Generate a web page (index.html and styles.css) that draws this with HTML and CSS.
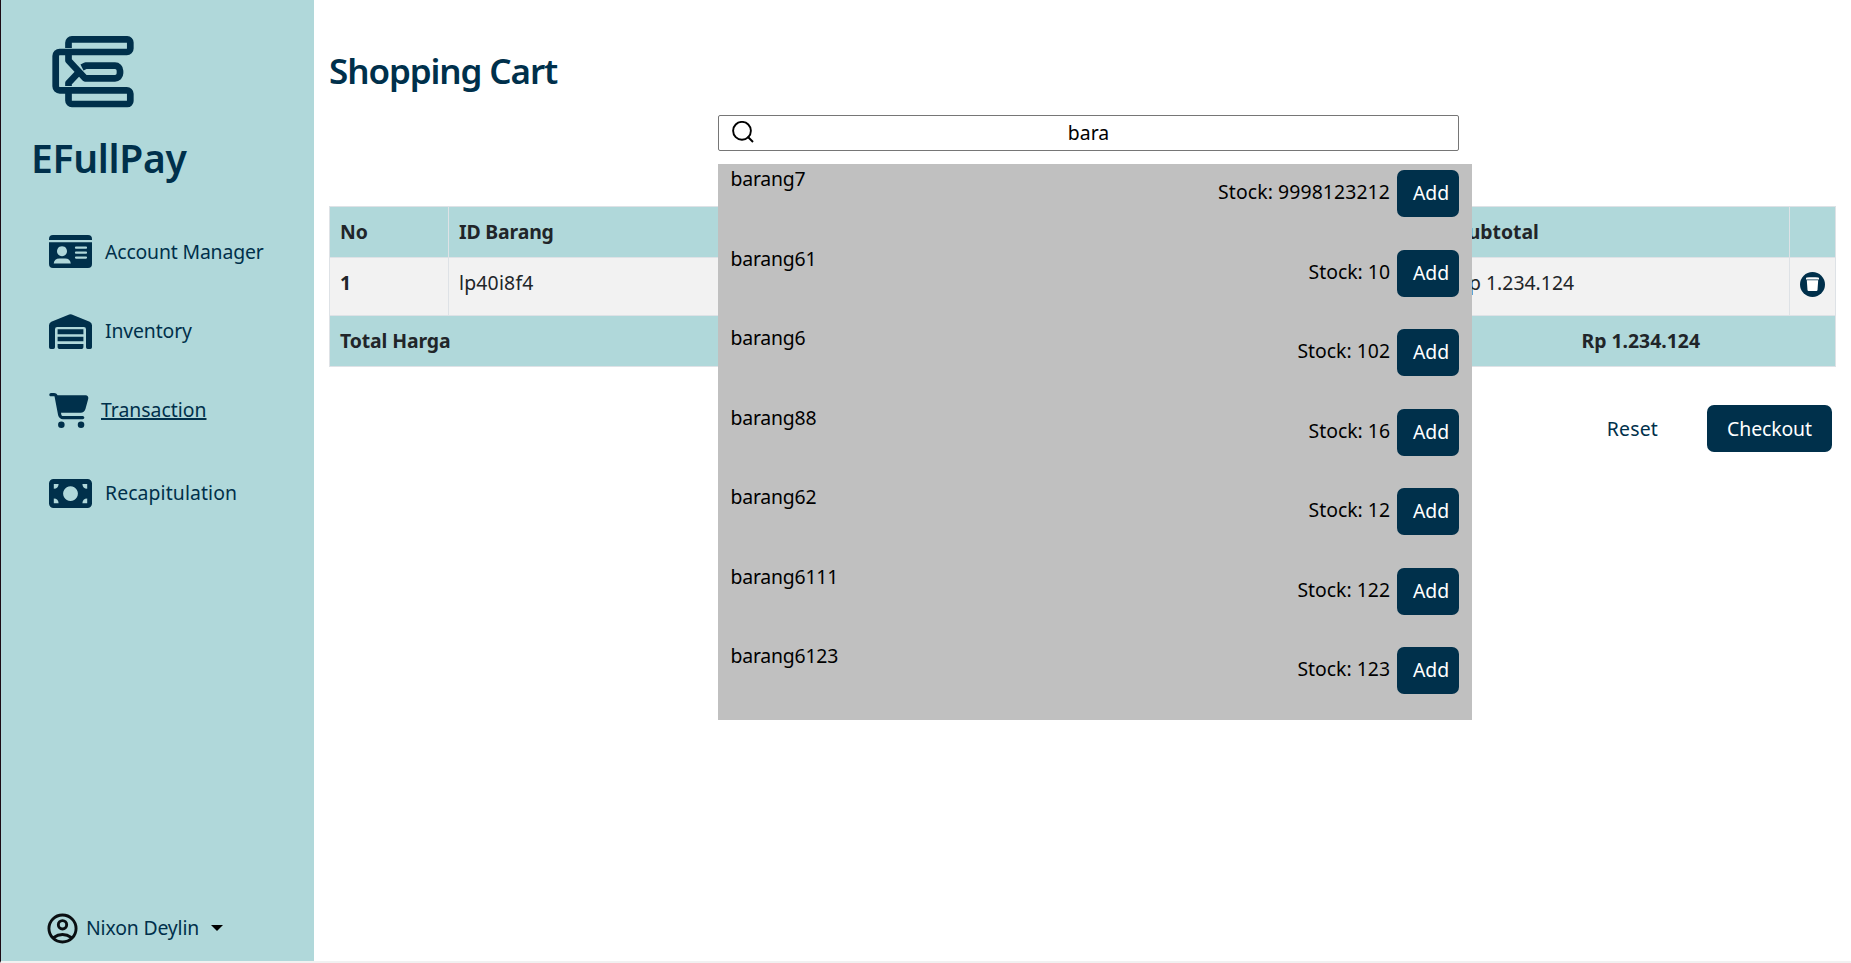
FILE: index.html
```html
<!DOCTYPE html>
<html lang="en">
<head>
<meta charset="utf-8">
<title>EFullPay</title>
<link rel="stylesheet" href="styles.css">
</head>
<body>
<div class="app">
  <aside class="sidebar">
    <svg class="logo" viewBox="0 0 84 74" fill="none" stroke="#00304b" stroke-width="6.700" stroke-linejoin="round">
      <path d="M17.500 12V6.800a3.400 3.400 0 0 1 3.400-3.400H76.300a3 3 0 0 1 3 3V12.500a3.500 3.500 0 0 1-3.500 3.500H8.700a4 4 0 0 0-4 4V50.300a4 4 0 0 0 4 4H75.800a3.500 3.500 0 0 1 3.500 3.500V65a3 3 0 0 1-3 3H20.900a3.400 3.400 0 0 1-3.400-3.400V57"/>
      <path d="M17.500 18V24.500L34 42.300H64a5 5 0 0 0 5-5V34.700a5 5 0 0 0-5-5H34.500L31 31.500M17.500 50V47L27 37"/>
    </svg>
    <h1 class="brand"><span>EFullPay</span></h1>
    <nav class="nav">
      <a class="nav-item">
        <svg class="i-card" viewBox="0 0 43 33"><path fill="#00304b" fill-rule="evenodd" d="M4 0H39a4 4 0 0 1 4 4V5H0V4A4 4 0 0 1 4 0ZM0 7.300H43V29a4 4 0 0 1-4 4H4a4 4 0 0 1-4-4ZM13 11.200a5 5 0 1 0 .01 0ZM10.500 23.500A5.800 5.800 0 0 0 4.700 28.500H21.800A5.800 5.800 0 0 0 16 23.500ZM27 11.600a1 1 0 0 0 0 2.200H37a1 1 0 0 0 0-2.200ZM27 16.600a1 1 0 0 0 0 2.200H37a1 1 0 0 0 0-2.200ZM27 21.500a1 1 0 0 0 0 2.200H37a1 1 0 0 0 0-2.200Z"/></svg>
        <span class="t-account">Account Manager</span>
      </a>
      <a class="nav-item">
        <svg class="i-house" viewBox="0 0 43 35"><path fill="#00304b" d="M0 11.500A4 4 0 0 1 2.300 7.800L20.200.4a3.500 3.500 0 0 1 2.600 0L40.700 7.800A4 4 0 0 1 43 11.500V33.300A1.700 1.700 0 0 1 41.300 35H38.700A1.700 1.700 0 0 1 37 33.300V15.300A2.200 2.200 0 0 0 34.800 13.100H8.200A2.200 2.200 0 0 0 6 15.300V33.300A1.700 1.700 0 0 1 4.300 35H1.700A1.700 1.700 0 0 1 0 33.300ZM8.600 15.300H34.400V20.300H8.600ZM8.600 22.800H34.400V27.300H8.600ZM8.600 30H34.400V33.300A1.700 1.700 0 0 1 32.700 35H10.300A1.700 1.700 0 0 1 8.600 33.300Z"/></svg>
        <span class="t-inventory">Inventory</span>
      </a>
      <a class="nav-item active">
        <svg class="i-cart" viewBox="0 0 576 512"><path fill="#00304b" d="M0 24C0 10.700 10.700 0 24 0H69.500c22 0 41.500 12.800 50.600 32h411c26.300 0 45.500 25 38.600 50.400l-41 152.300c-8.500 31.400-37 53.300-69.500 53.300H170.700l5.400 28.500c2.200 11.300 12.100 19.500 23.600 19.500H488c13.300 0 24 10.700 24 24s-10.700 24-24 24H199.700c-34.600 0-64.300-24.600-70.700-58.500L77.400 54.500c-.7-3.800-4-6.500-7.900-6.500H24C10.700 48 0 37.300 0 24zM128 464a48 48 0 1 1 96 0 48 48 0 1 1 -96 0zm336-48a48 48 0 1 1 0 96 48 48 0 1 1 0-96z"/></svg>
        <span class="t-transaction">Transaction</span>
      </a>
      <a class="nav-item last">
        <svg class="i-money" viewBox="0 0 43 29"><path fill="#00304b" fill-rule="evenodd" d="M4.500 0H38.500A4.500 4.500 0 0 1 43 4.500V24.500A4.500 4.500 0 0 1 38.500 29H4.500A4.500 4.500 0 0 1 0 24.500V4.500A4.500 4.500 0 0 1 4.500 0ZM4.800 5V9.800A5 5 0 0 0 9.600 5ZM38.200 5H33.400A5 5 0 0 0 38.200 9.800ZM4.800 24.300H9.600A5 5 0 0 0 4.800 19.500ZM38.200 24.300V19.500A5 5 0 0 0 33.400 24.300ZM21.500 7.200a7.400 7.400 0 1 0 .01 0Z"/></svg>
        <span class="t-recap">Recapitulation</span>
      </a>
    </nav>
    <div class="user">
      <svg class="i-user" viewBox="0 0 32 32" fill="none" stroke="#0a0f12" stroke-width="3"><circle cx="16" cy="16" r="14"/><circle cx="16" cy="12.200" r="4.300"/><path d="M6.500 25.500Q16 19 25.500 25.500"/></svg>
      <span class="t-user">Nixon Deylin</span>
      <i class="caret"></i>
    </div>
  </aside>
  <main class="main">
    <h2 class="title"><span>Shopping Cart</span></h2>
    <div class="search">
      <div class="search-box">
        <svg class="i-search" viewBox="0 0 22 22" fill="none" stroke="#000" stroke-width="1.900"><circle cx="10" cy="9.800" r="8.900"/><path d="M15.500 15.500L21 21"/></svg>
        <span class="t-query">bara</span>
      </div>
      <div class="results">
        <div class="result"><span class="name">barang7</span><span class="stock long">Stock: 9998123212</span><button class="btn add"><span>Add</span></button></div>
        <div class="result"><span class="name">barang61</span><span class="stock">Stock: 10</span><button class="btn add"><span>Add</span></button></div>
        <div class="result"><span class="name">barang6</span><span class="stock">Stock: 102</span><button class="btn add"><span>Add</span></button></div>
        <div class="result"><span class="name">barang88</span><span class="stock">Stock: 16</span><button class="btn add"><span>Add</span></button></div>
        <div class="result"><span class="name">barang62</span><span class="stock">Stock: 12</span><button class="btn add"><span>Add</span></button></div>
        <div class="result"><span class="name">barang6111</span><span class="stock">Stock: 122</span><button class="btn add"><span>Add</span></button></div>
        <div class="result"><span class="name">barang6123</span><span class="stock">Stock: 123</span><button class="btn add"><span>Add</span></button></div>
      </div>
    </div>
    <table class="cart">
      <colgroup><col class="c-no"><col class="c-id"><col class="c-sub"><col class="c-del"></colgroup>
      <tr class="head"><th><span>No</span></th><th><span class="t-id">ID Barang</span></th><th><span class="t-sub">Subtotal</span></th><th></th></tr>
      <tr class="row"><th><span>1</span></th><td><span class="t-code">lp40i8f4</span></td><td><span class="t-price">Rp 1.234.124</span></td>
        <td><svg class="i-trash" viewBox="0 0 25 25"><circle cx="12.500" cy="12.500" r="12.500" fill="#00304b"/><path fill="#fff" d="M6 6.200Q6 5.200 9.500 5.200H15.500Q19 5.200 19 6.200V7.600H6ZM6.800 8.200H18.200L17.500 18Q17.400 19 16.400 19H8.600Q7.600 19 7.500 18Z"/></svg></td></tr>
      <tr class="foot"><th colspan="2"><span class="t-total">Total Harga</span></th><th colspan="2" class="sum"><span class="t-sum">Rp 1.234.124</span></th></tr>
    </table>
    <div class="actions">
      <button class="btn reset"><span>Reset</span></button>
      <button class="btn checkout"><span>Checkout</span></button>
    </div>
  </main>
</div>
</body>
</html>
```
FILE: styles.css
```css
* { box-sizing: border-box; }
body { margin: 0; background: #fff; font-family: "Noto Sans", sans-serif; font-size: 19.4px; line-height: 30px; color: #212529; }
span { white-space: nowrap; }
svg { display: block; flex: none; }
.app { display: flex; height: 963px; border-left: 1px solid #1c0a14; border-bottom: 2px solid #f1f1f1; overflow: hidden; }
.sidebar { width: 313px; flex: none; background: #b0d8da; color: #00304b; display: flex; flex-direction: column; }
.logo { width: 84px; height: 74px; margin: 36px 0 0 50px; }
.brand { margin: 18px 0 0 30px; font-size: 39px; line-height: 60px; font-weight: 600; letter-spacing: -0.3px; }
.nav { margin-top: 24px; padding-left: 48px; display: flex; flex-direction: column; }
.nav-item { height: 79.500px; display: flex; align-items: center; gap: 13px; }
.nav-item.active { gap: 12px; text-decoration: underline; text-decoration-thickness: 2px; }
.nav-item.active span { padding-bottom: 1px; }
.nav-item.last { margin-top: 3px; }
.t-account { letter-spacing: -0.16px; }
.t-inventory { letter-spacing: -0.12px; }
.t-recap { letter-spacing: 0.1px; }
.t-user { letter-spacing: -0.15px; }
.i-card { width: 43px; height: 33px; }
.i-house { width: 43px; height: 35px; }
.i-cart { width: 40px; height: 35px; }
.i-money { width: 43px; height: 29px; }
.user { margin-top: auto; margin-bottom: 17px; padding-left: 46px; height: 32px; display: flex; align-items: center; }
.i-user { width: 31px; height: 31px; margin-right: 8px; }
.caret { margin-left: 12px; border: 6px solid transparent; border-top-color: #000; border-bottom: 0; }
.main { flex: 1; padding: 44px 15px 0 15px; position: relative; }
.title { margin: 0; font-size: 35px; line-height: 54px; font-weight: 600; letter-spacing: -1.1px; color: #00304b; }
.search { position: relative; width: 741px; margin: 17px 0 55px 389px; color: #000; }
.search-box { height: 36px; border: 1px solid #767676; border-radius: 2px; display: grid; grid-template-columns: 22px 1fr 22px; align-items: center; padding: 0 13px; text-align: center; }
.i-search { width: 22px; height: 22px; margin-bottom: 2px; }
.results { position: absolute; z-index: 2; top: 49px; left: 0; width: 754px; height: 556px; background: #c0c0c0; padding: 6px 13px 0; line-height: 29px; }
.result { height: 79.500px; display: flex; align-items: flex-start; }
.name { flex: 1; margin: -6px 0 0 -0.5px; letter-spacing: -0.2px; }
.stock { margin: 7px 7px 0 0; }
.long { letter-spacing: 0.1px; }
.btn { border: 0; border-radius: 7px; background: #00304b; color: #fff; font: inherit; height: 47px; padding: 0; }
.add { width: 62px; padding: 0 0 2px 6px; }
.cart { width: 1507px; table-layout: fixed; border-collapse: collapse; text-align: left; }
.c-no { width: 119px; } .c-id { width: 998px; } .c-sub { width: 343px; } .c-del { width: 46px; }
.cart th, .cart td { border: 1px solid #dee2e6; padding: 10px; height: 51px; vertical-align: top; }
.cart .row > * { height: 58px; background: #f2f2f2; }
.cart .head > *, .cart .foot > * { background: #b0d8da; }
.foot th:first-child { border-right: 0; }
.cart .sum { text-align: center; border-left: 0; }
.t-id { letter-spacing: -0.15px; }
.t-code { letter-spacing: 0.2px; }
.t-total { letter-spacing: -0.1px; }
.i-trash { width: 25px; height: 25px; margin-top: 4px; }
.actions { display: flex; justify-content: flex-end; gap: 49px; padding: 38px 4px 0 0; }
.reset { background: none; color: #00304b; letter-spacing: 0.2px; }
.checkout { width: 125px; letter-spacing: -0.1px; }
```
